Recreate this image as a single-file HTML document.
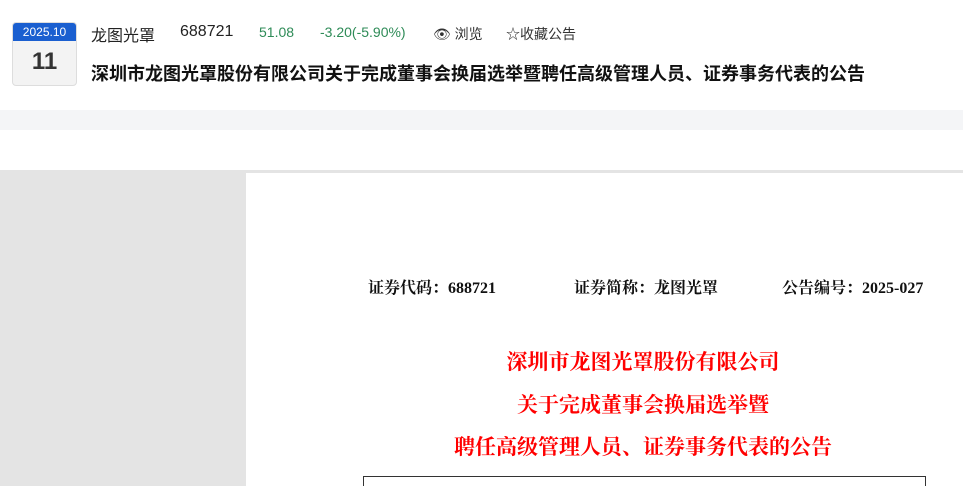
<!DOCTYPE html>
<html style="height:486px;overflow:hidden"><head><meta charset="utf-8"><style>
body{margin:0;width:963px;height:486px;overflow:hidden;background:#fff;font-family:"Liberation Sans","Noto Sans CJK SC",sans-serif;position:relative}
.a{position:absolute;white-space:nowrap}
.date{left:12px;top:22px;width:63px;height:62px;border:1px solid #ddd;border-radius:4px;background:#f3f3f3;overflow:hidden}
.date .t{background:#1a5fd0;color:#fff;font-size:12px;text-align:center;height:18px;line-height:18px}
.date .d{text-align:center;font-size:24px;font-weight:bold;color:#333;line-height:42px}
.s{font-family:"Liberation Serif","Noto Serif CJK SC",serif}
.red{color:#f00;font-size:21px;left:246px;width:794px;text-align:center;font-weight:bold;font-family:"Noto Serif CJK SC",serif}
</style></head><body>
<div class="a date"><div class="t">2025.10</div><div class="d">11</div></div>
<div class="a" style="left:91px;top:22px;font-size:16px;color:#222">龙图光罩</div>
<div class="a" style="left:180px;top:23px;font-size:16px;color:#222">688721</div>
<div class="a" style="left:259px;top:24px;font-size:14px;color:#2e8b57">51.08</div>
<div class="a" style="left:320px;top:24px;font-size:14px;color:#2e8b57">-3.20(-5.90%)</div>
<div class="a" style="left:433px;top:24px;font-size:14px;color:#333">👁 浏览</div>
<div class="a" style="left:506px;top:24px;font-size:14px;color:#333">☆收藏公告</div>
<div class="a" style="left:91px;top:60px;font-size:18px;font-weight:bold;color:#111">深圳市龙图光罩股份有限公司关于完成董事会换届选举暨聘任高级管理人员、证券事务代表的公告</div>
<div class="a" style="left:0;top:110px;width:963px;height:20px;background:#f4f5f7"></div>
<div class="a" style="left:0;top:170px;width:963px;height:316px;background:#e4e4e4"></div>
<div class="a" style="left:246px;top:173px;width:717px;height:313px;background:#fff"></div>
<div class="a s" style="left:368px;top:275px;font-size:16px;font-weight:bold;color:#111">证券代码：688721</div>
<div class="a s" style="left:574px;top:275px;font-size:16px;font-weight:bold;color:#111">证券简称：龙图光罩</div>
<div class="a s" style="left:782px;top:275px;font-size:16px;font-weight:bold;color:#111">公告编号：2025-027</div>
<div class="a red" style="top:346px">深圳市龙图光罩股份有限公司</div>
<div class="a red" style="top:389px">关于完成董事会换届选举暨</div>
<div class="a red" style="top:431px">聘任高级管理人员、证券事务代表的公告</div>
<div class="a" style="left:363px;top:476px;width:561px;height:9px;border:1px solid #333;border-bottom:none"></div>
</body></html>
